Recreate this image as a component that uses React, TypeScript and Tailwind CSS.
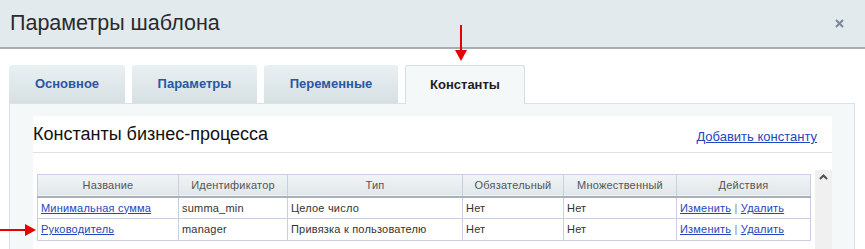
const rows = [
  { name: "Минимальная сумма", id: "summa_min", type: "Целое число", req: "Нет", multi: "Нет" },
  { name: "Руководитель", id: "manager", type: "Привязка к пользователю", req: "Нет", multi: "Нет" },
];

const tabs = [
  { label: "Основное", w: "w-[116px]" },
  { label: "Параметры", w: "w-[125px]" },
  { label: "Переменные", w: "w-[134px]" },
];

function RedArrowDown() {
  return (
    <svg className="absolute left-[455px] top-[25px]" width="12" height="36" viewBox="0 0 12 36">
      <line x1="6" y1="0" x2="6" y2="26" stroke="#e60000" strokeWidth="2" />
      <polygon points="0,25 12,25 6,36" fill="#e60000" />
    </svg>
  );
}

function RedArrowRight() {
  return (
    <svg className="absolute left-0 top-[224px]" width="36" height="12" viewBox="0 0 36 12">
      <line x1="0" y1="6" x2="26" y2="6" stroke="#e60000" strokeWidth="2" />
      <polygon points="25,0 25,12 36,6" fill="#e60000" />
    </svg>
  );
}

export default function App() {
  return (
    <div className="relative h-[249px] w-[865px] overflow-hidden bg-white font-['Liberation_Sans',Arial,sans-serif]">
      {/* Header */}
      <div className="flex h-[49px] items-center justify-between border-b-2 border-[#a9adb0] bg-[#e2eaed] pl-[10px] pr-[21px]">
        <div className="text-[21.5px] text-[#2b2b2b]">Параметры шаблона</div>
        <svg width="9" height="9" viewBox="0 0 9 9">
          <path d="M1 1 L8 8 M8 1 L1 8" stroke="#7c8897" strokeWidth="2" />
        </svg>
      </div>

      {/* Tabs */}
      <div className="mt-[16px] flex items-end gap-[7px] pl-[9px]">
        {tabs.map((t) => (
          <div
            key={t.label}
            className={`${t.w} flex h-[38px] items-center justify-center rounded-t-[3px] bg-gradient-to-b from-[#e9f0f2] to-[#d6e0e3] text-[13px] font-bold text-[#2957a4]`}
          >
            {t.label}
          </div>
        ))}
        <div className="relative -mb-px flex h-[39px] w-[120px] items-center justify-center rounded-t-[3px] border border-b-0 border-[#d3dfe4] bg-[#f4f8f9] text-[13px] font-bold text-[#1e1e1e]">
          Константы
        </div>
      </div>

      {/* Panel */}
      <div className="ml-[9px] mr-[10px] h-[200px] border border-[#d8e3e7] bg-[#f4f8f9] pl-[23px] pr-[22px] pt-[12px]">
        <div className="h-full bg-white">
          <div className="flex h-[37px] items-end justify-between border-b border-[#dbe2ea] pb-[7px] pr-[15px]">
            <div className="text-[18px] leading-[22px] text-[#111]">Константы бизнес-процесса</div>
            <a href="#" className="text-[13px] leading-[16px] text-[#2246c0] underline">
              Добавить константу
            </a>
          </div>

          <div className="mt-[17px] flex">
            <div className="flex-1 p-[4px]">
              <table className="w-full border-collapse border border-[#c8cfe3] text-[11px] tracking-[0.2px] text-[#333]">
                <thead>
                  <tr className="h-[22px] border-b-2 border-[#aab0b8] bg-gradient-to-b from-[#f1f4f6] to-[#e0e7ea] text-[#555]">
                    <th className="w-[141px] border-r border-[#c8cfe3] font-normal">Название</th>
                    <th className="w-[109px] border-r border-[#c8cfe3] font-normal">Идентификатор</th>
                    <th className="w-[175px] border-r border-[#c8cfe3] font-normal">Тип</th>
                    <th className="w-[101px] border-r border-[#c8cfe3] font-normal">Обязательный</th>
                    <th className="w-[113px] border-r border-[#c8cfe3] font-normal">Множественный</th>
                    <th className="font-normal">Действия</th>
                  </tr>
                </thead>
                <tbody>
                  {rows.map((r) => (
                    <tr key={r.id} className="h-[22px] border-b border-[#c8cfe3]">
                      <td className="border-r border-[#c8cfe3] px-[3px]">
                        <a href="#" className="text-[#2246c0] underline">{r.name}</a>
                      </td>
                      <td className="border-r border-[#c8cfe3] px-[3px]">{r.id}</td>
                      <td className="border-r border-[#c8cfe3] px-[3px]">{r.type}</td>
                      <td className="border-r border-[#c8cfe3] px-[3px]">{r.req}</td>
                      <td className="border-r border-[#c8cfe3] px-[3px]">{r.multi}</td>
                      <td className="px-[3px]">
                        <a href="#" className="text-[#2246c0] underline">Изменить</a>
                        <span className="text-[#888]"> | </span>
                        <a href="#" className="text-[#2246c0] underline">Удалить</a>
                      </td>
                    </tr>
                  ))}
                </tbody>
              </table>
            </div>
            <div className="flex h-[90px] w-[17px] justify-center bg-[#f0f0f0] pt-[4px]">
              <svg width="9" height="6" viewBox="0 0 9 6">
                <path d="M1 5 L4.5 1.5 L8 5" stroke="#505050" strokeWidth="2" fill="none" />
              </svg>
            </div>
          </div>
        </div>
      </div>

      <RedArrowDown />
      <RedArrowRight />
    </div>
  );
}
